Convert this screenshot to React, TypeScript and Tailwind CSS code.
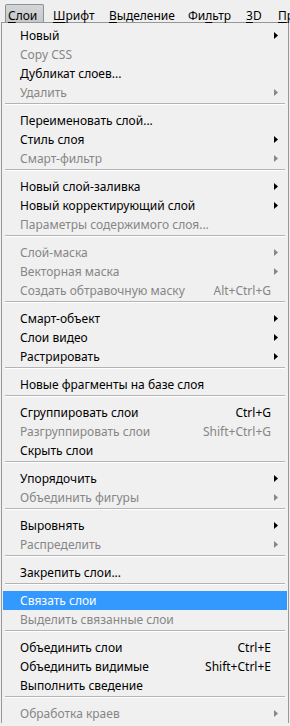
import React from "react";

type Item =
  | { sep: true }
  | {
      sep?: false;
      label: string;
      shortcut?: string;
      sub?: boolean;
      disabled?: boolean;
      active?: boolean;
    };

const items: Item[] = [
  { label: "Новый", sub: true },
  { label: "Copy CSS", disabled: true },
  { label: "Дубликат слоев..." },
  { label: "Удалить", sub: true, disabled: true },
  { sep: true },
  { label: "Переименовать слой..." },
  { label: "Стиль слоя", sub: true },
  { label: "Смарт-фильтр", sub: true, disabled: true },
  { sep: true },
  { label: "Новый слой-заливка", sub: true },
  { label: "Новый корректирующий слой", sub: true },
  { label: "Параметры содержимого слоя...", disabled: true },
  { sep: true },
  { label: "Слой-маска", sub: true, disabled: true },
  { label: "Векторная маска", sub: true, disabled: true },
  { label: "Создать обтравочную маску", shortcut: "Alt+Ctrl+G", disabled: true },
  { sep: true },
  { label: "Смарт-объект", sub: true },
  { label: "Слои видео", sub: true },
  { label: "Растрировать", sub: true },
  { sep: true },
  { label: "Новые фрагменты на базе слоя" },
  { sep: true },
  { label: "Сгруппировать слои", shortcut: "Ctrl+G" },
  { label: "Разгруппировать слои", shortcut: "Shift+Ctrl+G", disabled: true },
  { label: "Скрыть слои" },
  { sep: true },
  { label: "Упорядочить", sub: true },
  { label: "Объединить фигуры", sub: true, disabled: true },
  { sep: true },
  { label: "Выровнять", sub: true },
  { label: "Распределить", sub: true, disabled: true },
  { sep: true },
  { label: "Закрепить слои..." },
  { sep: true },
  { label: "Связать слои", active: true },
  { label: "Выделить связанные слои", disabled: true },
  { sep: true },
  { label: "Объединить слои", shortcut: "Ctrl+E" },
  { label: "Объединить видимые", shortcut: "Shift+Ctrl+E" },
  { label: "Выполнить сведение" },
  { sep: true },
  { label: "Обработка краев", sub: true, disabled: true },
];

function Arrow({ color }: { color: string }) {
  return (
    <svg width="4" height="7" viewBox="0 0 4 7" className="block">
      <polygon points="0,0 4,3.5 0,7" fill={color} />
    </svg>
  );
}

export default function App() {
  return (
    <div
      className="w-[290px] h-[726px] overflow-hidden bg-[#f0f0f0] text-[12px] text-black"
      style={{ fontFamily: '"Noto Sans", "Open Sans", sans-serif' }}
    >
      {/* menu bar */}
      <div className="h-[22px] flex pl-[5px] pt-[4px] bg-[#efefef] whitespace-nowrap leading-[17px]">
        <div className="w-[45px] shrink-0">
          <div className="w-[39px] h-[18px] border border-b-0 border-[#8e9193] rounded-t-[2px] bg-gradient-to-b from-[#d3d5d7] to-[#c6c8ca] pl-[2px] pt-[2px]">
            <span className="underline underline-offset-2">С</span>лои
          </div>
        </div>
        <div className="w-[56px] shrink-0 pl-[3px] pt-[3px]">
          <span className="underline underline-offset-2">Ш</span>рифт
        </div>
        <div className="w-[79px] shrink-0 pl-[3px] pt-[3px]">
          <span className="underline underline-offset-2">В</span>ыделение
        </div>
        <div className="w-[58px] shrink-0 pl-[3px] pt-[3px]">
          Фи<span className="underline underline-offset-2">л</span>ьтр
        </div>
        <div className="w-[32px] shrink-0 pl-[3px] pt-[3px]">
          <span className="underline underline-offset-2">3</span>D
        </div>
        <div className="shrink-0 pl-[3px] pt-[3px]">
          <span className="underline underline-offset-2">П</span>р
        </div>
      </div>

      {/* dropdown */}
      <div className="ml-[1px] w-[288px] border border-b-0 border-[#979797] bg-[#f0f0f0] pt-[3px] px-[1px]">
        {items.map((it, i) => {
          if (it.sep) {
            return (
              <div key={i} className="h-[9px] pt-[1px] px-[2px]">
                <div className="h-[1px] bg-[#b4b4b4]" />
                <div className="h-[1px] bg-white" />
              </div>
            );
          }
          const color = it.active ? "text-white" : it.disabled ? "text-[#868686]" : "text-black";
          const arrowColor = it.active ? "#ffffff" : it.disabled ? "#868686" : "#000000";
          return (
            <div
              key={i}
              className={`h-[19px] flex items-center whitespace-nowrap leading-[19px] ${color} ${
                it.active ? "bg-[#3399ff]" : ""
              }`}
            >
              <div className="pl-[17px] flex-1">{it.label}</div>
              {it.shortcut && <div className="pr-[16px]">{it.shortcut}</div>}
              {it.sub && (
                <div className="w-[13px] flex justify-start">
                  <Arrow color={arrowColor} />
                </div>
              )}
            </div>
          );
        })}
      </div>
    </div>
  );
}
